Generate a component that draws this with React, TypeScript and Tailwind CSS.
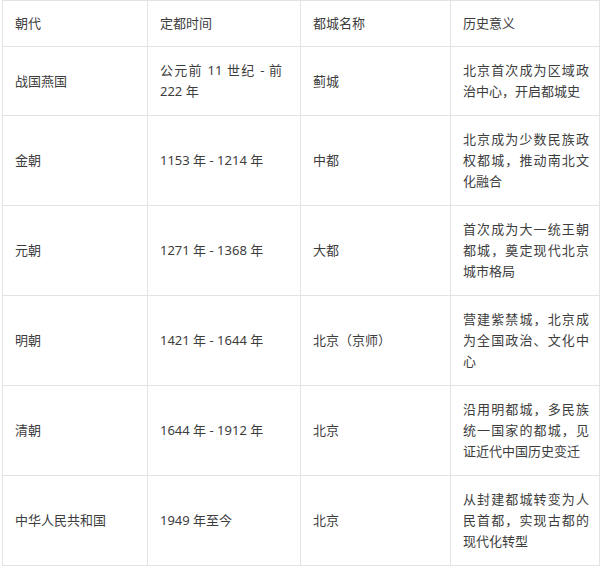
const rows = [
  ["战国燕国", "公元前 11 世纪 - 前 222 年", "蓟城", "北京首次成为区域政治中心，开启都城史"],
  ["金朝", "1153 年 - 1214 年", "中都", "北京成为少数民族政权都城，推动南北文化融合"],
  ["元朝", "1271 年 - 1368 年", "大都", "首次成为大一统王朝都城，奠定现代北京城市格局"],
  ["明朝", "1421 年 - 1644 年", "北京（京师）", "营建紫禁城，北京成为全国政治、文化中心"],
  ["清朝", "1644 年 - 1912 年", "北京", "沿用明都城，多民族统一国家的都城，见证近代中国历史变迁"],
  ["中华人民共和国", "1949 年至今", "北京", "从封建都城转变为人民首都，实现古都的现代化转型"],
];

const head = ["朝代", "定都时间", "都城名称", "历史意义"];

export default function App() {
  return (
    <div
      className="w-[600px] h-[567px] bg-white text-[#3d3d3d] text-[13px] leading-[21px]"
      style={{ fontFamily: '"Noto Sans", "Noto Sans CJK SC", sans-serif' }}
    >
      <table className="ml-[2px] w-[597px] table-fixed border-collapse">
        <colgroup>
          <col className="w-[145px]" />
          <col className="w-[153px]" />
          <col className="w-[150px]" />
          <col className="w-[149px]" />
        </colgroup>
        <thead>
          <tr className="h-[46px]">
            {head.map((h) => (
              <th
                key={h}
                className="border border-[#e3e3e3] px-[12px] text-left font-normal align-middle"
              >
                {h}
              </th>
            ))}
          </tr>
        </thead>
        <tbody>
          {rows.map((r, i) => (
            <tr key={r[0]} className={i === 0 ? "h-[69px]" : "h-[90px]"}>
              <td className="border border-[#e3e3e3] px-[12px] align-middle">{r[0]}</td>
              <td className="border border-[#e3e3e3] pl-[12px] pr-[18px] align-middle text-justify">
                {r[1]}
              </td>
              <td className="border border-[#e3e3e3] px-[12px] align-middle">{r[2]}</td>
              <td className="border border-[#e3e3e3] pl-[12px] pr-[10px] align-middle text-justify">
                {r[3]}
              </td>
            </tr>
          ))}
        </tbody>
      </table>
    </div>
  );
}
